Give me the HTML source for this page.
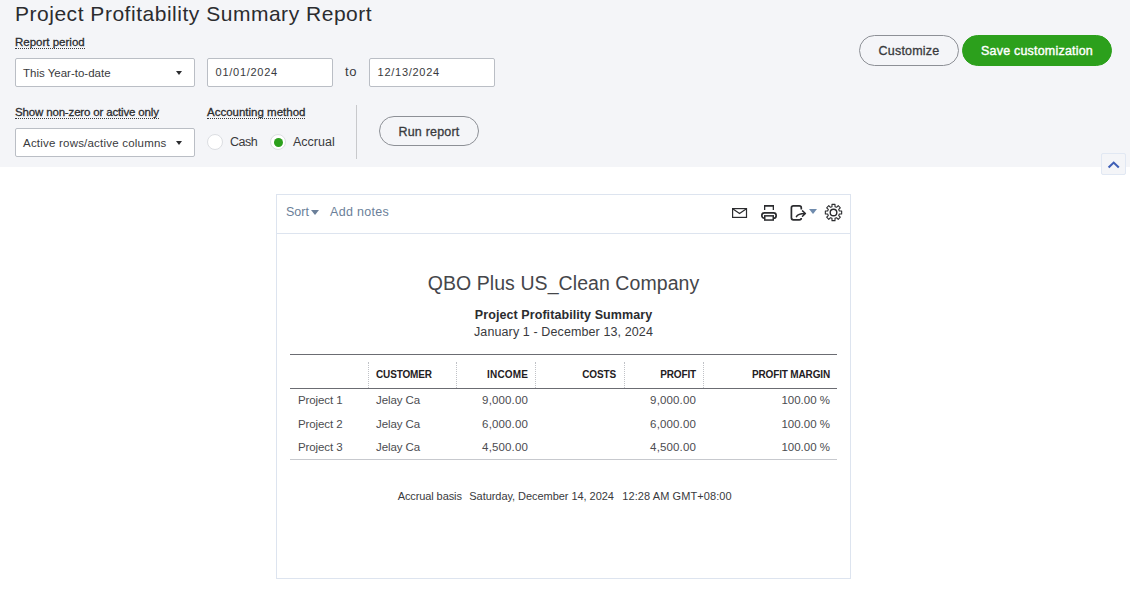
<!DOCTYPE html>
<html><head><meta charset="utf-8">
<style>
*{box-sizing:border-box;margin:0;padding:0}
html,body{width:1130px;height:613px;overflow:hidden;background:#fff;font-family:"Liberation Sans",sans-serif;color:#393a3d}
.abs{position:absolute}
#top{position:absolute;left:0;top:0;width:1130px;height:167px;background:#f4f5f8}
h1{position:absolute;left:15px;top:2px;font-size:21px;font-weight:400;color:#2b2c2f;white-space:nowrap;line-height:24px;letter-spacing:0.52px}
.lbl{position:absolute;font-size:11.5px;font-weight:400;color:#2b2c2f;line-height:12px;border-bottom:1px dotted #393a3d;white-space:nowrap;-webkit-text-stroke:0.3px #2b2c2f}
.sel{position:absolute;height:29px;border:1px solid #babec5;background:#fff;border-radius:2px;font-size:11.5px;line-height:28px;padding-left:7px;color:#393a3d;white-space:nowrap;overflow:hidden}
.sel i{position:absolute;right:12px;top:12px;width:0;height:0;border-left:3px solid transparent;border-right:3px solid transparent;border-top:4px solid #2b2c2f}
.inp{position:absolute;height:29px;width:126px;border:1px solid #babec5;background:#fff;border-radius:2px;font-size:11px;line-height:26px;padding-left:7.6px;color:#393a3d;letter-spacing:0.72px}
.btn{position:absolute;height:31px;border-radius:16px;border:1px solid #8d9096;font-size:12.5px;letter-spacing:0.2px;text-align:center;line-height:30px;color:#393a3d;-webkit-text-stroke:0.3px #393a3d;white-space:nowrap}
.radio{position:absolute;width:16px;height:16px;border-radius:50%;background:#fff;border:1px solid #dcdee2}
.rt{position:absolute;font-size:12.5px;line-height:17px;color:#393a3d}
#card{position:absolute;left:276px;top:194px;width:575px;height:385px;border:1px solid #dde4ef;background:#fff}
#tb{position:absolute;left:0;top:0;width:573px;height:39px;border-bottom:1px solid #dde4ef}
.tl{position:absolute;font-size:12.5px;color:#6b7f99;line-height:16px;white-space:nowrap}
table{position:absolute;left:13px;top:159px;width:547px;border-collapse:collapse;font-size:11.5px}
.vs{position:absolute;top:167px;width:0;height:26px;border-left:1px dotted #c0c2c7}
.th{position:absolute;top:173px;font-size:10px;letter-spacing:-0.15px;font-weight:700;line-height:14px;color:#1f2023;white-space:nowrap}
.td{position:absolute;font-size:11.5px;line-height:16px;color:#4b4c50;white-space:nowrap}
.r{text-align:right}
.ft{position:absolute;top:294px;font-size:11px;line-height:14px;color:#393a3d;white-space:nowrap}
.tx{letter-spacing:-0.1px}.nm{letter-spacing:0.14px}.pc{letter-spacing:0}
</style></head><body>
<div id="top">
<h1>Project Profitability Summary Report</h1>
<div class="lbl" style="left:15px;top:36px">Report period</div>
<div class="sel" style="left:15px;top:58px;width:180px">This Year-to-date<i></i></div>
<div class="inp" style="left:207px;top:58px">01/01/2024</div>
<div class="rt" style="left:345px;top:63px;font-size:13px;letter-spacing:0.6px">to</div>
<div class="inp" style="left:369px;top:58px">12/13/2024</div>
<div class="lbl" style="left:15px;top:106px;letter-spacing:-0.16px">Show non-zero or active only</div>
<div class="sel" style="left:15px;top:128px;width:180px;letter-spacing:0.21px">Active rows/active columns<i></i></div>
<div class="lbl" style="left:207px;top:106px">Accounting method</div>
<div class="radio" style="left:207px;top:134px"></div>
<div class="rt" style="left:230px;top:134px;letter-spacing:-0.5px">Cash</div>
<div class="radio" style="left:270px;top:134px"><span style="position:absolute;left:2.5px;top:2.5px;width:9.5px;height:9.5px;border-radius:50%;background:#2ca01c"></span></div>
<div class="rt" style="left:293px;top:134px">Accrual</div>
<div class="abs" style="left:356px;top:105px;width:1px;height:54px;background:#c8c9cc"></div>
<div class="btn" style="left:379px;top:116px;width:100px;height:30px;line-height:30px">Run report</div>
<div class="btn" style="left:859px;top:35px;width:100px">Customize</div>
<div class="btn" style="left:962px;top:35px;width:150px;background:#2ca01c;border-color:#2ca01c;color:#fff;-webkit-text-stroke:0.4px #fff">Save customization</div>
</div>
<div class="abs" style="left:1101px;top:153px;width:25px;height:22px;background:#f4f5f8;border:1px solid #e1e8f3;border-radius:2px">
<svg width="23" height="20" viewBox="0 0 23 20" style="position:absolute;left:0;top:0"><path d="M6.6 13.6 L11.7 8.6 L16.8 13.6" fill="none" stroke="#3f5fb6" stroke-width="2.1"/></svg>
</div>
<div id="card">
<div id="tb">
<div class="tl" style="left:9px;top:9px">Sort</div>
<div class="abs" style="left:34px;top:15px;width:0;height:0;border-left:4px solid transparent;border-right:4px solid transparent;border-top:5px solid #6b7f99"></div>
<div class="tl" style="left:53px;top:9px;letter-spacing:0.3px">Add notes</div>
<svg class="abs" style="left:455px;top:13px" width="16" height="11" viewBox="0 0 16 11"><rect x="0.6" y="0.6" width="13.9" height="8.8" fill="none" stroke="#2b2c2f" stroke-width="1.2"/><path d="M1 1 L7.55 5.6 L14.1 1" fill="none" stroke="#2b2c2f" stroke-width="1.2"/></svg>
<svg class="abs" style="left:484px;top:10px" width="17" height="17" viewBox="0 0 17 17"><path d="M3 5 V0 H13 V5 H11.7 V1.7 H4.3 V5 Z" fill="#2b2c2f"/><rect x="0.85" y="7.85" width="14.3" height="5.4" rx="2.6" fill="none" stroke="#2b2c2f" stroke-width="1.7"/><rect x="3.75" y="10.85" width="8.5" height="4.2" fill="#fff" stroke="#2b2c2f" stroke-width="1.5"/></svg>
<svg class="abs" style="left:513px;top:10px" width="18" height="17" viewBox="0 0 18 17"><path d="M11.3 4.4 V2.9 Q11.3 0.9 9.3 0.9 H3.4 Q1.4 0.9 1.4 2.9 V12.8 Q1.4 14.8 3.4 14.8 H9.3 Q11.3 14.8 11.3 13" fill="none" stroke="#2b2c2f" stroke-width="1.7"/><path d="M6.4 11.6 Q8 8.5 15 8.5 M12.5 5.9 L15.4 8.5 L12.5 11.3" fill="none" stroke="#2b2c2f" stroke-width="1.5" stroke-linecap="round" stroke-linejoin="round"/></svg>
<div class="abs" style="left:532px;top:14.2px;width:0;height:0;border-left:4px solid transparent;border-right:4px solid transparent;border-top:5px solid #6f8bad"></div>
<svg class="abs" style="left:546.9px;top:7.9px" width="19" height="19" viewBox="0 0 19 19"><g fill="none" stroke="#2b2c2f"><circle cx="9.5" cy="9.5" r="3.3" stroke-width="1.4"/><path d="M7.99 3.64 L7.99 1.34 L11.01 1.34 L11.01 3.64 L12.57 4.29 L14.20 2.66 L16.34 4.80 L14.71 6.43 L15.36 7.99 L17.66 7.99 L17.66 11.01 L15.36 11.01 L14.71 12.57 L16.34 14.20 L14.20 16.34 L12.57 14.71 L11.01 15.36 L11.01 17.66 L7.99 17.66 L7.99 15.36 L6.43 14.71 L4.80 16.34 L2.66 14.20 L4.29 12.57 L3.64 11.01 L1.34 11.01 L1.34 7.99 L3.64 7.99 L4.29 6.43 L2.66 4.80 L4.80 2.66 L6.43 4.29 Z" stroke-width="1.1" stroke-linejoin="round"/></g></svg>

</div>
<div class="abs ctr" style="left:0;top:76px;width:573px;text-align:center;font-size:19.5px;line-height:24px;letter-spacing:0.07px;color:#45464a">QBO Plus US_Clean Company</div>
<div class="abs ctr" style="left:0;top:112px;width:573px;text-align:center;font-size:12.5px;line-height:16px;font-weight:700;letter-spacing:0.08px;color:#2b2c2f">Project Profitability Summary</div>
<div class="abs ctr" style="left:0;top:129px;width:573px;text-align:center;font-size:12.5px;line-height:16px;letter-spacing:0.11px;color:#393a3d">January 1 - December 13, 2024</div>

<div class="abs" style="left:13px;top:159px;width:547px;height:1px;background:#6b6c72"></div>
<div class="abs" style="left:13px;top:193px;width:547px;height:1px;background:#6b6c72"></div>
<div class="abs" style="left:13px;top:264px;width:547px;height:1px;background:#c7c9ce"></div>
<div class="vs" style="left:91px"></div><div class="vs" style="left:179px"></div><div class="vs" style="left:258px"></div><div class="vs" style="left:347px"></div><div class="vs" style="left:426px"></div>
<div class="th" style="left:99px">CUSTOMER</div>
<div class="th r" style="right:322px;letter-spacing:0.15px">INCOME</div>
<div class="th r" style="right:234px">COSTS</div>
<div class="th r" style="right:154px">PROFIT</div>
<div class="th r" style="right:20px">PROFIT MARGIN</div>
<div class="td tx" style="left:21px;top:197px">Project 1</div><div class="td tx" style="left:99px;top:197px">Jelay Ca</div><div class="td r nm" style="right:322px;top:197px">9,000.00</div><div class="td r nm" style="right:154px;top:197px">9,000.00</div><div class="td r pc" style="right:20px;top:197px">100.00 %</div>
<div class="td tx" style="left:21px;top:221px">Project 2</div><div class="td tx" style="left:99px;top:221px">Jelay Ca</div><div class="td r nm" style="right:322px;top:221px">6,000.00</div><div class="td r nm" style="right:154px;top:221px">6,000.00</div><div class="td r pc" style="right:20px;top:221px">100.00 %</div>
<div class="td tx" style="left:21px;top:244px">Project 3</div><div class="td tx" style="left:99px;top:244px">Jelay Ca</div><div class="td r nm" style="right:322px;top:244px">4,500.00</div><div class="td r nm" style="right:154px;top:244px">4,500.00</div><div class="td r pc" style="right:20px;top:244px">100.00 %</div>
<div class="ft" style="left:120.7px;letter-spacing:-0.1px">Accrual basis</div><div class="ft" style="left:192.3px;letter-spacing:-0.05px">Saturday, December 14, 2024</div><div class="ft" style="left:345.3px;letter-spacing:0.08px">12:28 AM GMT+08:00</div>
</div>
</body></html>
